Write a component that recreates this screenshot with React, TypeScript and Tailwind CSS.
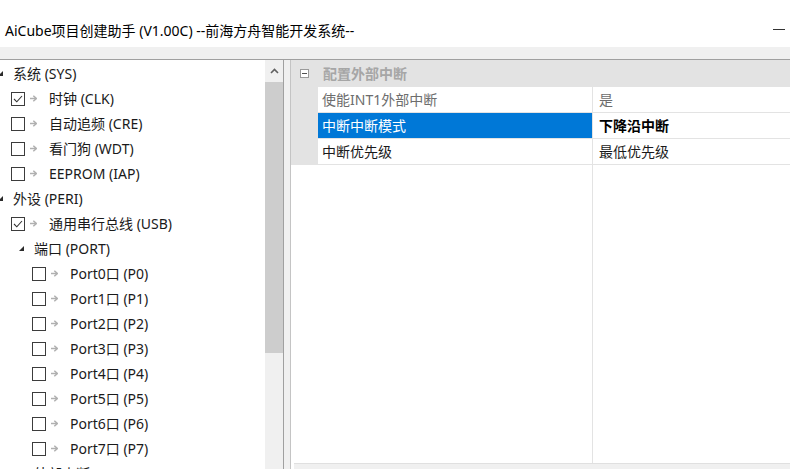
import React from "react";

const Check = ({ checked }: { checked?: boolean }) => (
  <div className="w-[14px] h-[14px] border border-[#3c3c3c] bg-white flex items-center justify-center shrink-0">
    {checked && (
      <svg width="12" height="12" viewBox="0 0 12 12">
        <path d="M2 6 L4.8 8.8 L10 3" fill="none" stroke="#333" strokeWidth="1.1" />
      </svg>
    )}
  </div>
);

const Arrow = () => (
  <svg width="7" height="7" viewBox="0 0 7 7" className="shrink-0">
    <path d="M0 3.5 H6" stroke="#b0b0b0" strokeWidth="1.5" />
    <path d="M3.3 0.8 L6.3 3.5 L3.3 6.2" fill="none" stroke="#b0b0b0" strokeWidth="1.5" />
  </svg>
);

const Tri = () => (
  <svg width="5" height="5" viewBox="0 0 5 5" className="shrink-0">
    <polygon points="5,0 5,5 0,5" fill="#2b2b2b" />
  </svg>
);

type Item =
  | { kind: "group"; label: string }
  | { kind: "check"; level: 1 | 2; label: string; checked?: boolean }
  | { kind: "sub"; label: string };

const items: Item[] = [
  { kind: "group", label: "系统 (SYS)" },
  { kind: "check", level: 1, label: "时钟 (CLK)", checked: true },
  { kind: "check", level: 1, label: "自动追频 (CRE)" },
  { kind: "check", level: 1, label: "看门狗 (WDT)" },
  { kind: "check", level: 1, label: "EEPROM (IAP)" },
  { kind: "group", label: "外设 (PERI)" },
  { kind: "check", level: 1, label: "通用串行总线 (USB)", checked: true },
  { kind: "sub", label: "端口 (PORT)" },
  { kind: "check", level: 2, label: "Port0口 (P0)" },
  { kind: "check", level: 2, label: "Port1口 (P1)" },
  { kind: "check", level: 2, label: "Port2口 (P2)" },
  { kind: "check", level: 2, label: "Port3口 (P3)" },
  { kind: "check", level: 2, label: "Port4口 (P4)" },
  { kind: "check", level: 2, label: "Port5口 (P5)" },
  { kind: "check", level: 2, label: "Port6口 (P6)" },
  { kind: "check", level: 2, label: "Port7口 (P7)" },
  { kind: "sub", label: "外部中断 (INT)" },
];

const Row = ({ it }: { it: Item }) => {
  if (it.kind === "group")
    return (
      <div className="h-[25px] flex items-center ml-[-2px] shrink-0">
        <Tri />
        <span className="ml-[10px]">{it.label}</span>
      </div>
    );
  if (it.kind === "sub")
    return (
      <div className="h-[25px] flex items-center pl-[19px] shrink-0">
        <Tri />
        <span className="ml-[10px]">{it.label}</span>
      </div>
    );
  return (
    <div className={`h-[25px] flex items-center shrink-0 ${it.level === 1 ? "pl-[11px]" : "pl-[32px]"}`}>
      <Check checked={it.checked} />
      <span className="ml-[5px] flex items-center">
        <Arrow />
      </span>
      <span className="ml-[12px]">{it.label}</span>
    </div>
  );
};

export default function App() {
  return (
    <div className="w-[790px] h-[469px] overflow-hidden bg-white flex flex-col font-['Noto_Sans','Noto_Sans_CJK_SC',sans-serif] text-[#1a1a1a] leading-none">
      <div className="h-[47px] shrink-0 flex items-center justify-between pl-[5px] pr-[5px]">
        <span className="text-[14px] mt-[14px] text-black">AiCube项目创建助手 (V1.00C) --前海方舟智能开发系统--</span>
        <div className="w-[12px] h-[1px] bg-[#333] mt-[12px]" />
      </div>
      <div className="h-[12px] shrink-0 bg-[#f0f0f0]" />
      <div className="flex-1 flex border-t border-[#a0a0a0] min-h-0 bg-[#f0f0f0]">
        {/* Left tree panel */}
        <div className="w-[284px] shrink-0 flex border-r border-[#a0a0a0] bg-white min-h-0">
          <div className="flex-1 flex flex-col pt-[1px] text-[14px] overflow-hidden">
            {items.map((it, i) => (
              <Row key={i} it={it} />
            ))}
          </div>
          <div className="w-[18px] shrink-0 bg-[#f0f0f0] flex flex-col">
            <div className="h-[22px] flex items-center justify-center">
              <svg width="9" height="6" viewBox="0 0 9 6">
                <path d="M1 5 L4.5 1.5 L8 5" fill="none" stroke="#606060" strokeWidth="1.6" />
              </svg>
            </div>
            <div className="h-[271px] bg-[#cdcdcd]" />
          </div>
        </div>
        {/* Right property grid */}
        <div className="flex-1 ml-[6px] border-l border-[#c4c4c4] bg-white flex flex-col min-h-0 text-[14px]">
          <div className="h-[27px] shrink-0 flex items-center bg-[#e3e3e3]">
            <div className="w-[27px] flex justify-center">
              <div className="w-[9px] h-[9px] border border-[#9a9a9a] bg-white flex items-center justify-center">
                <div className="w-[5px] h-[1px] bg-[#505050]" />
              </div>
            </div>
            <span className="ml-[5px] font-bold text-[#a6a6a6]">配置外部中断</span>
          </div>
          {[
            { n: "使能INT1外部中断", v: "是", gray: true },
            { n: "中断中断模式", v: "下降沿中断", sel: true },
            { n: "中断优先级", v: "最低优先级" },
          ].map((r, i) => (
            <div key={i} className="h-[26px] shrink-0 flex">
              <div className="w-[27px] bg-[#e3e3e3]" />
              <div
                className={`w-[275px] flex items-center pl-[4px] border-b border-r border-[#e3e3e3] ${
                  r.sel ? "bg-[#0078d7] text-white" : r.gray ? "text-[#6d6d6d]" : "text-[#1a1a1a]"
                }`}
              >
                {r.n}
              </div>
              <div
                className={`flex-1 flex items-center pl-[6px] border-b border-[#e3e3e3] ${
                  r.sel ? "font-bold text-black" : r.gray ? "text-[#6d6d6d]" : "text-[#1a1a1a]"
                }`}
              >
                {r.v}
              </div>
            </div>
          ))}
          <div className="flex-1 flex">
            <div className="w-[302px] border-r border-[#e3e3e3]" />
            <div className="flex-1" />
          </div>
          <div className="h-[6px] shrink-0 ml-[3px] bg-[#f0f0f0] border-t border-[#e0e0e0]" />
        </div>
      </div>
    </div>
  );
}
